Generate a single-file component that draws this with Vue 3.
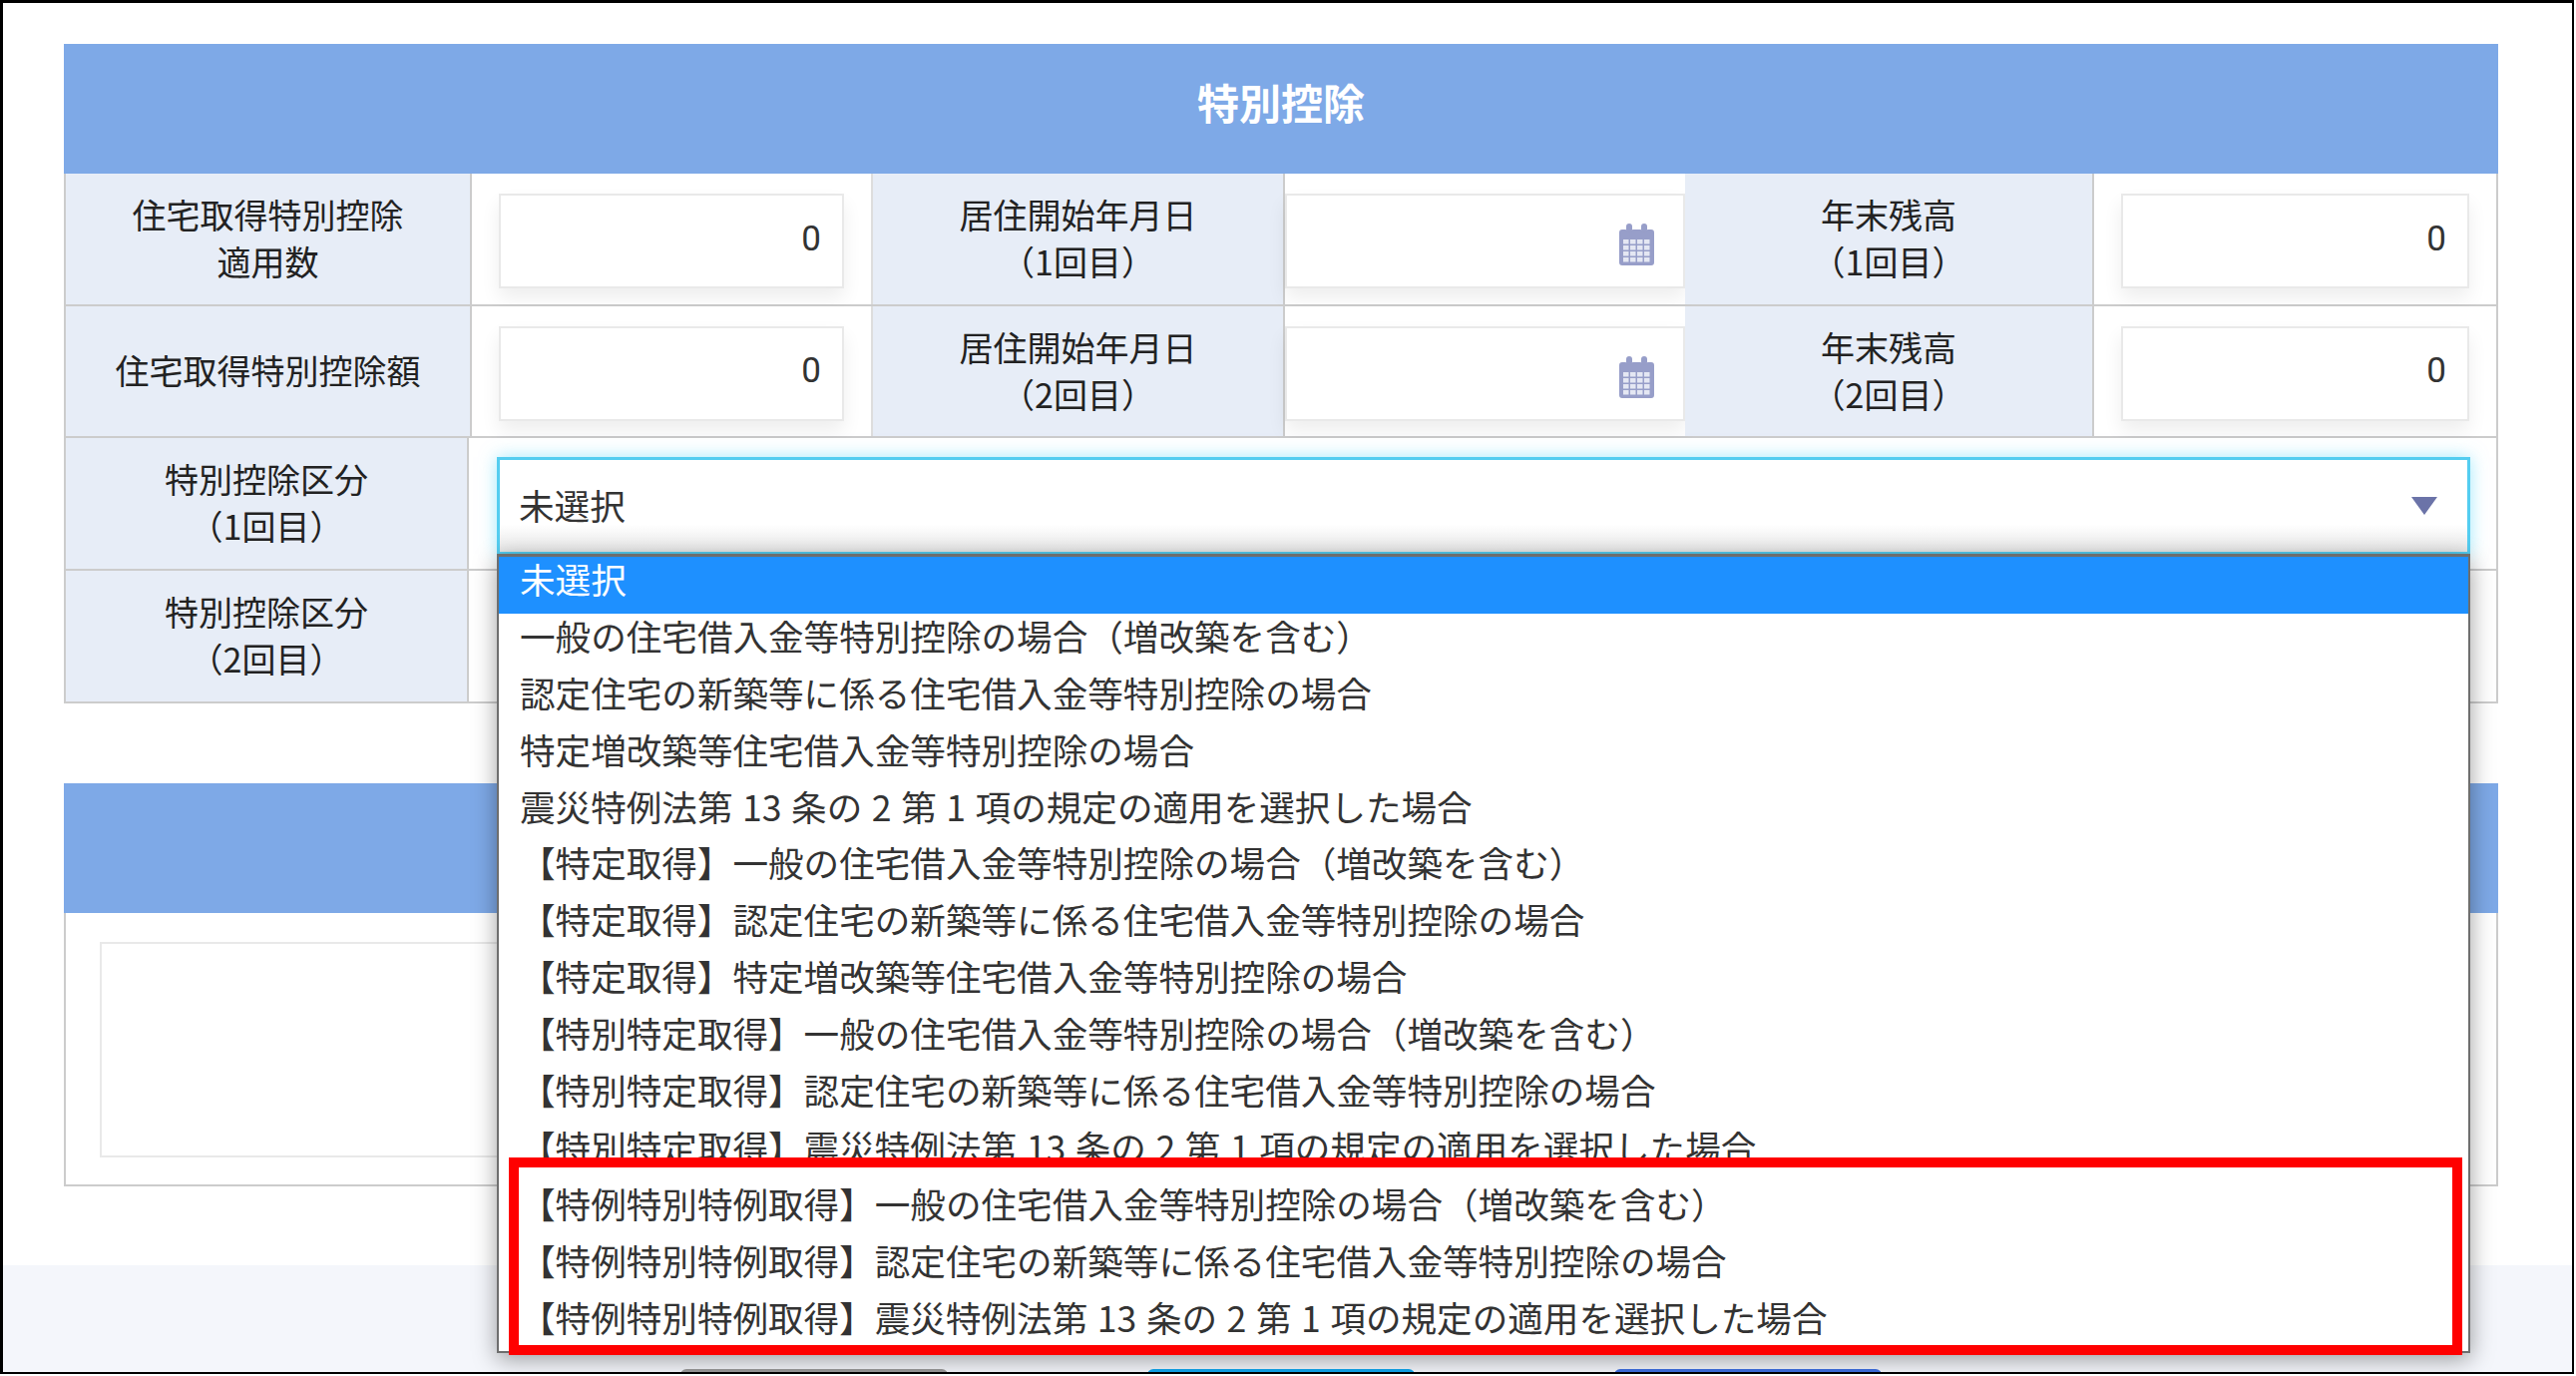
<script setup>
const options = [
  '未選択',
  '一般の住宅借入金等特別控除の場合（増改築を含む）',
  '認定住宅の新築等に係る住宅借入金等特別控除の場合',
  '特定増改築等住宅借入金等特別控除の場合',
  '震災特例法第 13 条の 2 第 1 項の規定の適用を選択した場合',
  '【特定取得】一般の住宅借入金等特別控除の場合（増改築を含む）',
  '【特定取得】認定住宅の新築等に係る住宅借入金等特別控除の場合',
  '【特定取得】特定増改築等住宅借入金等特別控除の場合',
  '【特別特定取得】一般の住宅借入金等特別控除の場合（増改築を含む）',
  '【特別特定取得】認定住宅の新築等に係る住宅借入金等特別控除の場合',
  '【特別特定取得】震災特例法第 13 条の 2 第 1 項の規定の適用を選択した場合',
  '【特例特別特例取得】一般の住宅借入金等特別控除の場合（増改築を含む）',
  '【特例特別特例取得】認定住宅の新築等に係る住宅借入金等特別控除の場合',
  '【特例特別特例取得】震災特例法第 13 条の 2 第 1 項の規定の適用を選択した場合'
]
const rows = [
  { a: ['住宅取得特別控除', '適用数'], b: ['居住開始年月日', '（1回目）'], c: ['年末残高', '（1回目）'] },
  { a: ['住宅取得特別控除額'], b: ['居住開始年月日', '（2回目）'], c: ['年末残高', '（2回目）'] }
]
const gridCells = [0, 1, 2, 3]
</script>

<template>
  <div class="page">
    <div class="frame">
      <main class="content">
        <section class="table">
          <h2 class="band title">特別控除</h2>
          <div v-for="(row, i) in rows" :key="i" class="row six">
            <div class="label"><span v-for="t in row.a" :key="t">{{ t }}</span></div>
            <div class="value"><div class="input">0</div></div>
            <div class="label"><span v-for="t in row.b" :key="t">{{ t }}</span></div>
            <div class="value date">
              <div class="input">
                <svg class="cal" viewBox="0 0 35 42" aria-hidden="true">
                  <path d="M3 6h3.5a4.5 4.5 0 0 0 7 0h8a4.5 4.5 0 0 0 7 0H32a3 3 0 0 1 3 3v30a3 3 0 0 1-3 3H3a3 3 0 0 1-3-3V9a3 3 0 0 1 3-3z" fill="#979ec9"/>
                  <rect x="7" y="0" width="6" height="9" rx="3" fill="#979ec9"/>
                  <rect x="22" y="0" width="6" height="9" rx="3" fill="#979ec9"/>
                  <g fill="#e4e7f3">
                    <template v-for="y in gridCells" :key="y">
                      <rect v-for="x in gridCells" :key="x" :x="4 + x * 7" :y="16 + y * 6" width="5.5" height="4.5"/>
                    </template>
                  </g>
                </svg>
              </div>
            </div>
            <div class="label"><span v-for="t in row.c" :key="t">{{ t }}</span></div>
            <div class="value"><div class="input">0</div></div>
          </div>
          <div class="row two">
            <div class="label"><span>特別控除区分</span><span>（1回目）</span></div>
            <div class="value select-cell">
              <div class="select">
                <span>未選択</span>
                <i class="arrow"></i>
              </div>
            </div>
          </div>
          <div class="row two last">
            <div class="label"><span>特別控除区分</span><span>（2回目）</span></div>
            <div class="value"></div>
          </div>
        </section>

        <section class="panel">
          <div class="band empty"></div>
          <div class="panel-body"><div class="textbox"></div></div>
        </section>
      </main>

      <footer class="footer">
        <span class="btn gray"></span>
        <span class="btn cyan"></span>
        <span class="btn blue"></span>
      </footer>

      <ul class="dropdown">
        <li v-for="(o, i) in options" :key="o" :class="{ active: i === 0 }">{{ o }}</li>
      </ul>
      <div class="redbox"></div>
    </div>
  </div>
</template>

<style>
html, body { margin: 0; padding: 0; background: #fff; }
</style>

<style scoped>
* { box-sizing: border-box; }
.page {
  width: 2582px;
  height: 1379px;
  overflow: hidden;
  background: #fff;
  font-family: "Noto Sans CJK JP", "Noto Sans", sans-serif;
  color: #222;
}
.frame {
  position: relative;
  width: 2580px;
  height: 1377px;
  border: solid #000;
  border-width: 3px 2px 2px 3px;
  display: flex;
  flex-direction: column;
  overflow: hidden;
  background: #fff;
}
.content {
  flex: 1;
  padding: 41px 74px 0 61px;
}
.band {
  margin: 0;
  height: 130px;
  background: #7ea9e7;
}
.title {
  color: #fff;
  font-size: 42px;
  font-weight: 700;
  display: flex;
  align-items: center;
  justify-content: center;
  padding-bottom: 16px;
}
.row {
  display: grid;
  height: 132.7px;
  border-left: 2px solid #ccc;
  border-right: 2px solid #ccc;
  border-bottom: 2px solid #ccc;
}
.six { grid-template-columns: 407px 402px 413px 401px 410px 1fr; }
.two { grid-template-columns: 404px 1fr; }
.label {
  background: #e7edf7;
  font-size: 34px;
  line-height: 47px;
  display: flex;
  flex-direction: column;
  align-items: center;
  justify-content: center;
  padding-bottom: 3px;
  border-right: 2px solid #ccc;
  color: #222;
}
.value {
  padding: 20px 27px 14px 27px;
  background: #fff;
  border-right: 2px solid #ddd;
}
.value:last-child { border-right: 0; }
.value.date { padding-left: 0; padding-right: 0; border-right: 0; }
.input {
  height: 95px;
  border: 2px solid #e9e9e9;
  background: #fff;
  box-shadow: 0 10px 18px rgba(0, 0, 0, 0.07);
  display: flex;
  align-items: center;
  justify-content: flex-end;
  padding: 0 21px 5px 0;
  font-family: Roboto, "Noto Sans", sans-serif;
  font-size: 35px;
  color: #333;
}
.date .input { padding: 0 29px 0 0; }
.cal {
  width: 35px;
  height: 42px;
  margin-top: 7px;
}
.select-cell { padding: 19px 26px 0 28px; }
.select {
  height: 97px;
  border: 3px solid #54cdf0;
  border-bottom-width: 2px;
  background: linear-gradient(to bottom, #fff 70%, #e8e8e8 100%);
  box-shadow: 0 0 16px rgba(90, 215, 250, 0.55);
  display: flex;
  align-items: center;
  justify-content: space-between;
  padding: 0 30px 4px 19px;
  font-size: 35.6px;
  color: #333;
}
.arrow {
  width: 0;
  height: 0;
  margin-top: 4px;
  border-left: 13px solid transparent;
  border-right: 13px solid transparent;
  border-top: 18px solid #6b73a8;
}
.panel { margin-top: 80px; }
.panel-body {
  height: 274px;
  border: solid #ccc;
  border-width: 0 2px 2px 2px;
  padding: 29px 26px 27px 34px;
}
.textbox {
  height: 216px;
  border: 2px solid #e9e9e9;
}
.footer {
  height: 107px;
  flex: none;
  background: #f4f6fb;
  display: flex;
  gap: 200px;
  padding: 104px 0 0 679px;
}
.btn {
  width: 268px;
  height: 40px;
  border-radius: 6px 6px 0 0;
}
.gray { background: #9a9a9a; }
.cyan { background: #12a5ec; }
.blue { background: #3f6fe0; }
.dropdown {
  position: absolute;
  left: 495px;
  top: 552px;
  width: 1978px;
  height: 801px;
  margin: 0;
  padding: 0;
  list-style: none;
  background: #fff;
  border: solid #6e6e6e;
  border-width: 3px 2px 2px 2px;
  box-shadow: 0 6px 22px rgba(0, 0, 0, 0.38);
  overflow: hidden;
}
.dropdown li {
  height: 56.9px;
  line-height: 44px;
  padding-left: 21px;
  font-size: 35.6px;
  word-spacing: 1.6px;
  color: #333;
  white-space: nowrap;
}
.dropdown li.active {
  background: #1e90ff;
  color: #fff;
}
.redbox {
  position: absolute;
  left: 507px;
  top: 1157px;
  width: 1958px;
  height: 198px;
  border: 10px solid #f00;
}
</style>
